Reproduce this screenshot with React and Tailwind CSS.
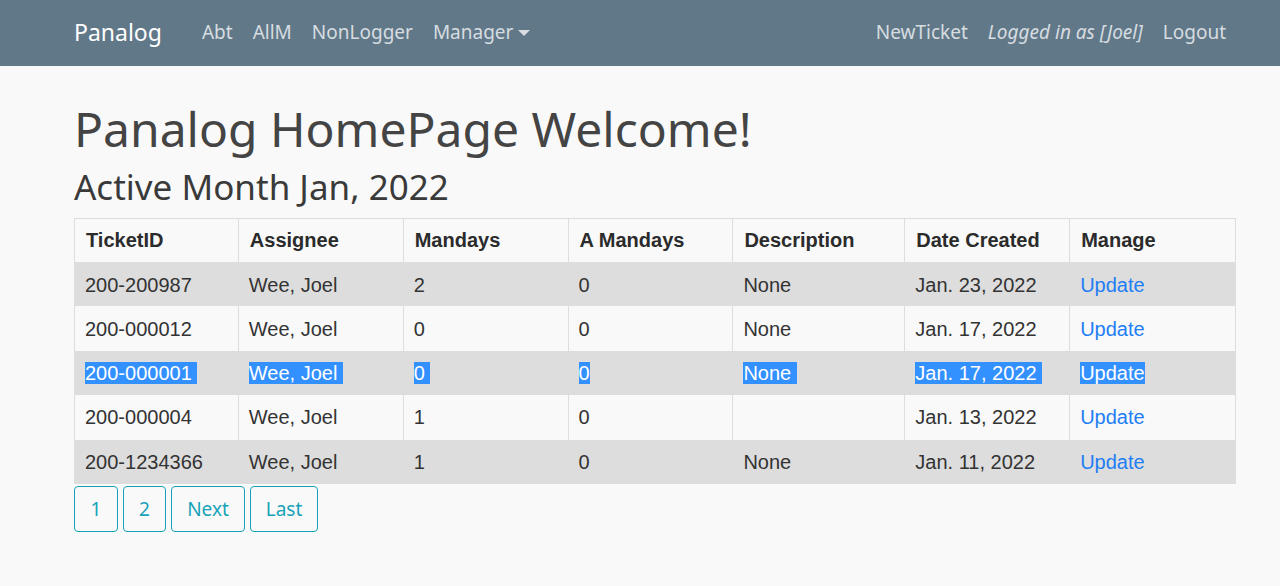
import React from 'react'

const ROWS = [
  { id: '200-200987', who: 'Wee, Joel', md: '2', amd: '0', desc: 'None', date: 'Jan. 23, 2022' },
  { id: '200-000012', who: 'Wee, Joel', md: '0', amd: '0', desc: 'None', date: 'Jan. 17, 2022' },
  { id: '200-000001', who: 'Wee, Joel', md: '0', amd: '0', desc: 'None', date: 'Jan. 17, 2022', selected: true },
  { id: '200-000004', who: 'Wee, Joel', md: '1', amd: '0', desc: '', date: 'Jan. 13, 2022' },
  { id: '200-1234366', who: 'Wee, Joel', md: '1', amd: '0', desc: 'None', date: 'Jan. 11, 2022' },
]

const HEADERS = ['TicketID', 'Assignee', 'Mandays', 'A Mandays', 'Description', 'Date Created', 'Manage']
const WIDTHS = ['w-[164px]', 'w-[165px]', 'w-[165px]', 'w-[165px]', 'w-[172px]', 'w-[165px]', 'w-[166px]']

const ui = { fontFamily: '"Noto Sans", "Open Sans", sans-serif' }
const arial = { fontFamily: '"Liberation Sans", Arial, sans-serif' }

function Cell({ children, selected, link, trail }) {
  if (!children) return null
  if (selected) {
    return (
      <span className="bg-[#3390ff] text-white">
        {children}
        {trail ? '\u00a0' : ''}
      </span>
    )
  }
  return <span className={link ? 'text-[#1e7ef5]' : ''}>{children}</span>
}

export default function App() {
  return (
    <div className="min-h-[586px] bg-[#f9f9f9]">
      {/* navbar */}
      <nav className="h-[66px] bg-[#617889]" style={ui}>
        <div className="ml-[74px] flex h-full w-[1162px] items-center pb-[2px]">
          <span className="mr-[40px] text-[23px] text-white">Panalog</span>
          <div className="flex items-center gap-[20px] text-[19px] text-white/75">
            <span>Abt</span>
            <span>AllM</span>
            <span>NonLogger</span>
            <span className="flex items-center">
              Manager
              <span className="ml-[5px] mt-[2px] h-0 w-0 border-x-[6px] border-t-[6px] border-x-transparent border-t-white/75" />
            </span>
          </div>
          <div className="ml-auto mr-[10px] flex items-center gap-[20px] text-[19px] text-white/75">
            <span>NewTicket</span>
            <span className="italic">Logged in as [Joel]</span>
            <span>Logout</span>
          </div>
        </div>
      </nav>

      <div className="ml-[74px] w-[1162px]">
        <h1 className="mt-[34px] text-[48px] leading-[1.2] text-[#444]" style={ui}>
          Panalog HomePage Welcome!
        </h1>
        <h2 className="mt-[8px] text-[35px] leading-[1.2] text-[#3a3a3a]" style={ui}>
          Active Month Jan, 2022
        </h2>

        <table className="mt-[10px] border-collapse text-[20px] text-[#333]" style={arial}>
          <thead>
            <tr className="h-[44px]">
              {HEADERS.map((h, i) => (
                <th
                  key={h}
                  className={`${WIDTHS[i]} border border-[#dddddd] px-[11px] text-left font-bold text-[#2b2b2b]`}
                >
                  {h}
                </th>
              ))}
            </tr>
          </thead>
          <tbody>
            {ROWS.map((r, idx) => {
              const striped = idx % 2 === 0
              const cells = [r.id, r.who, r.md, r.amd, r.desc, r.date, 'Update']
              return (
                <tr key={r.id} className={`h-[44.4px] ${striped ? 'bg-[#dddddd]' : 'bg-[#f9f9f9]'}`}>
                  {cells.map((c, i) => (
                    <td key={i} className="border-x border-[#dddddd] px-[10px]">
                      <Cell selected={r.selected} link={i === 6} trail={i !== 3 && i !== 6}>
                        {c}
                      </Cell>
                    </td>
                  ))}
                </tr>
              )
            })}
          </tbody>
        </table>

        {/* pagination */}
        <div className="mt-[2px] flex gap-[5px] text-[19px] text-[#17a2b8]" style={ui}>
          {[
            ['1', 'w-[44px]'],
            ['2', 'w-[43px]'],
            ['Next', 'w-[74px]'],
            ['Last', 'w-[68px]'],
          ].map(([t, w]) => (
            <button
              key={t}
              className={`${w} flex h-[46px] items-center justify-center rounded-[4px] border border-[#17a2b8]`}
            >
              {t}
            </button>
          ))}
        </div>
      </div>
    </div>
  )
}
